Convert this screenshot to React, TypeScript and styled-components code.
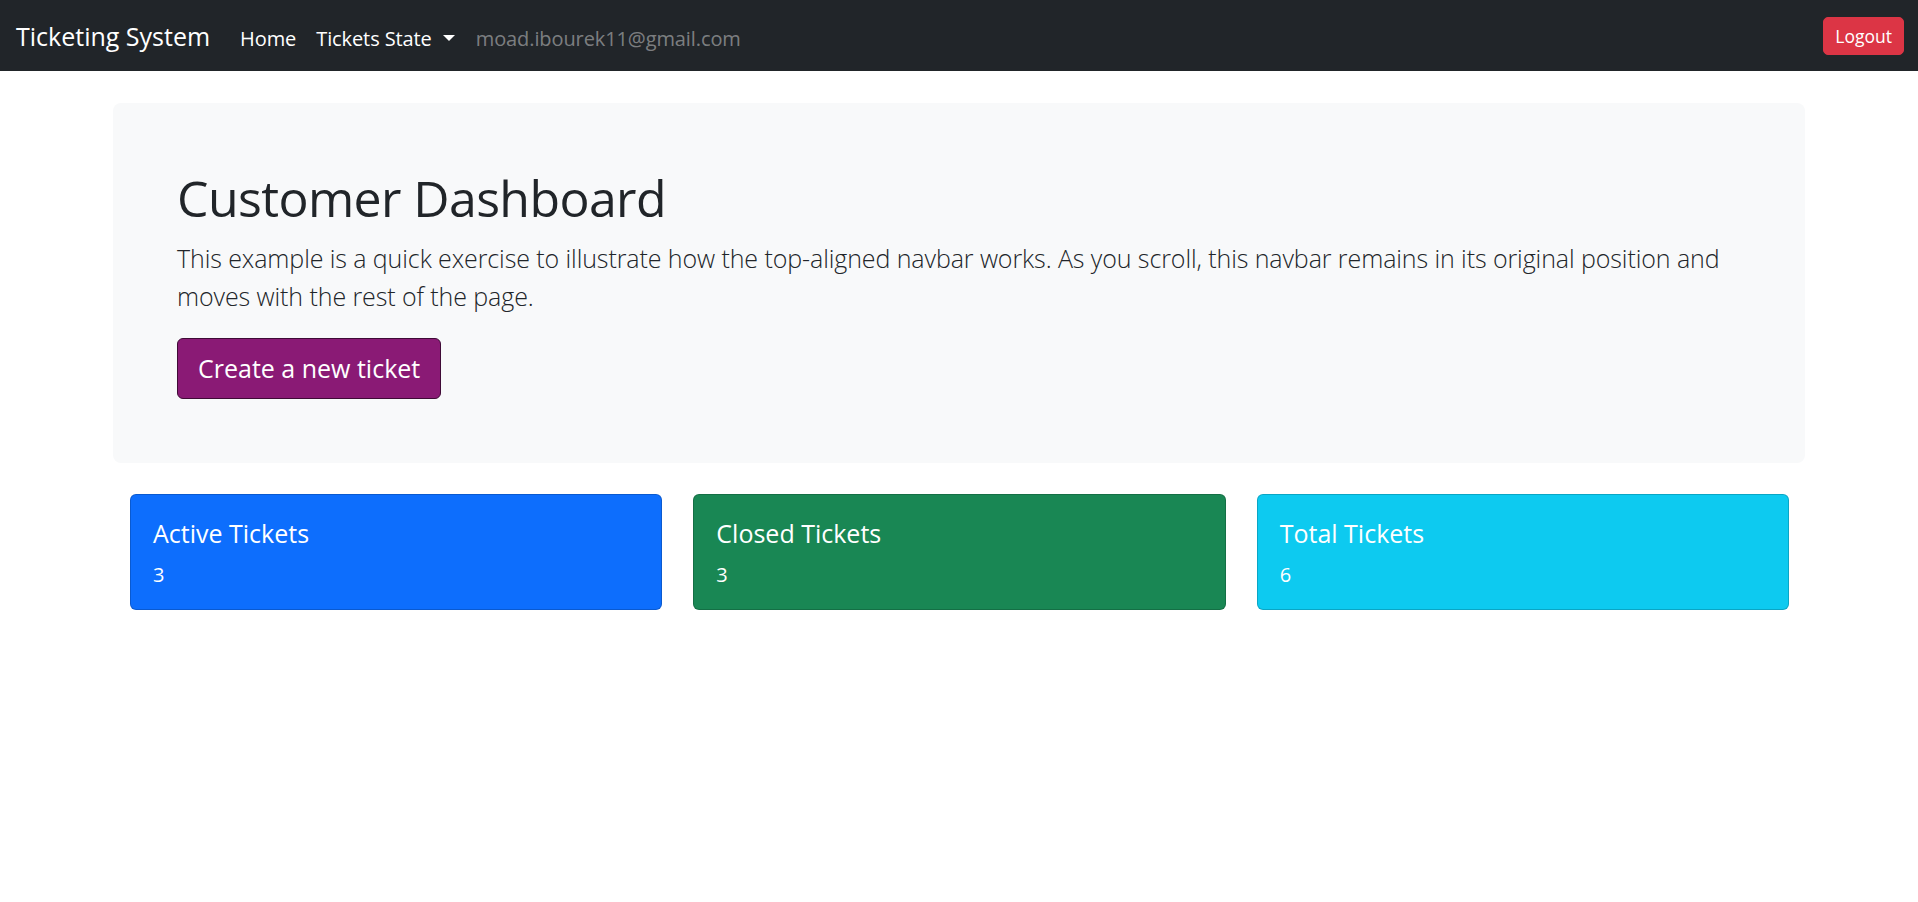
import React from "react";
import styled, { createGlobalStyle } from "styled-components";

const GlobalStyle = createGlobalStyle`
  html, body {
    margin: 0;
    padding: 0;
    background: #ffffff;
    font-family: "Open Sans", "Noto Sans", Arial, sans-serif;
    color: #212529;
  }
  * { box-sizing: border-box; }
`;

const Navbar = styled.nav`
  display: flex;
  align-items: center;
  height: 71px;
  padding: 1px 14px 0 16px;
  background: #212529;
`;

const NavLeft = styled.div`
  display: flex;
  align-items: baseline;
`;

const Brand = styled.a`
  font-size: 25px;
  line-height: 30px;
  color: #ffffff;
  text-decoration: none;
  margin-right: 20px;
`;

const NavLink = styled.a<{ $muted?: boolean }>`
  display: inline-flex;
  align-items: center;
  font-size: 20px;
  line-height: 24px;
  padding: 0 10px;
  letter-spacing: -0.1px;
  color: ${(p) => (p.$muted ? "rgba(255,255,255,0.42)" : "#ffffff")};
  text-decoration: none;
`;

const Caret = styled.span`
  display: inline-block;
  width: 0;
  height: 0;
  margin-left: 11px;
  margin-right: 1px;
  border-top: 6px solid currentColor;
  border-left: 6px solid transparent;
  border-right: 6px solid transparent;
  transform: translateY(-1px);
`;

const LogoutButton = styled.button`
  margin-left: auto;
  height: 38px;
  padding: 0 11px;
  background: #dc3545;
  border: 1px solid #dc3545;
  border-radius: 5px;
  color: #ffffff;
  font-family: inherit;
  font-size: 17.5px;
  line-height: 24px;
  margin-top: -1px;
`;

const Container = styled.main`
  width: 1692px;
  margin: 32px auto 0;
`;

const Hero = styled.section`
  background: #f8f9fa;
  border-radius: 8px;
  padding: 64px;
`;

const Title = styled.h1`
  margin: 0 0 8px;
  font-size: 50px;
  line-height: 63.6px;
  font-weight: 400;
  letter-spacing: -0.6px;
  color: #212529;
`;

const Lead = styled.p`
  margin: 0 0 22px;
  font-size: 25px;
  line-height: 38.5px;
  font-weight: 300;
  letter-spacing: -0.09px;
  color: #212529;
`;

const PrimaryButton = styled.button`
  height: 61px;
  padding: 0 20px;
  background: #8a1a75;
  border: 1px solid #3f0b36;
  border-radius: 6px;
  color: #ffffff;
  font-family: inherit;
  font-size: 25px;
  line-height: 30px;
`;

const CardRow = styled.div`
  display: grid;
  grid-template-columns: repeat(3, 1fr);
  gap: 31px;
  padding: 0 16px 0 17px;
  margin-top: 31px;
`;

const StatCard = styled.div<{ $bg: string }>`
  height: 116px;
  padding: 23px 20px 19px 22px;
  background: ${(p) => p.$bg};
  border: 1px solid rgba(0, 0, 0, 0.175);
  border-radius: 6px;
  color: #ffffff;
`;

const CardTitle = styled.h5`
  margin: 0 0 12px;
  font-size: 25px;
  line-height: 30px;
  font-weight: 400;
`;

const CardValue = styled.p`
  margin: 0;
  font-size: 20px;
  line-height: 30px;
`;

const stats = [
  { title: "Active Tickets", value: 3, bg: "#0d6efd" },
  { title: "Closed Tickets", value: 3, bg: "#198754" },
  { title: "Total Tickets", value: 6, bg: "#0dcaf0" },
];

export default function App() {
  return (
    <>
      <GlobalStyle />
      <Navbar>
        <NavLeft>
          <Brand href="#">Ticketing System</Brand>
          <NavLink href="#">Home</NavLink>
          <NavLink href="#">
            Tickets State
            <Caret />
          </NavLink>
          <NavLink $muted>moad.ibourek11@gmail.com</NavLink>
        </NavLeft>
        <LogoutButton>Logout</LogoutButton>
      </Navbar>
      <Container>
        <Hero>
          <Title>Customer Dashboard</Title>
          <Lead>
            This example is a quick exercise to illustrate how the top-aligned navbar works. As you scroll, this navbar
            remains in its original position and moves with the rest of the page.
          </Lead>
          <PrimaryButton>Create a new ticket</PrimaryButton>
        </Hero>
        <CardRow>
          {stats.map((s) => (
            <StatCard key={s.title} $bg={s.bg}>
              <CardTitle>{s.title}</CardTitle>
              <CardValue>{s.value}</CardValue>
            </StatCard>
          ))}
        </CardRow>
      </Container>
    </>
  );
}
